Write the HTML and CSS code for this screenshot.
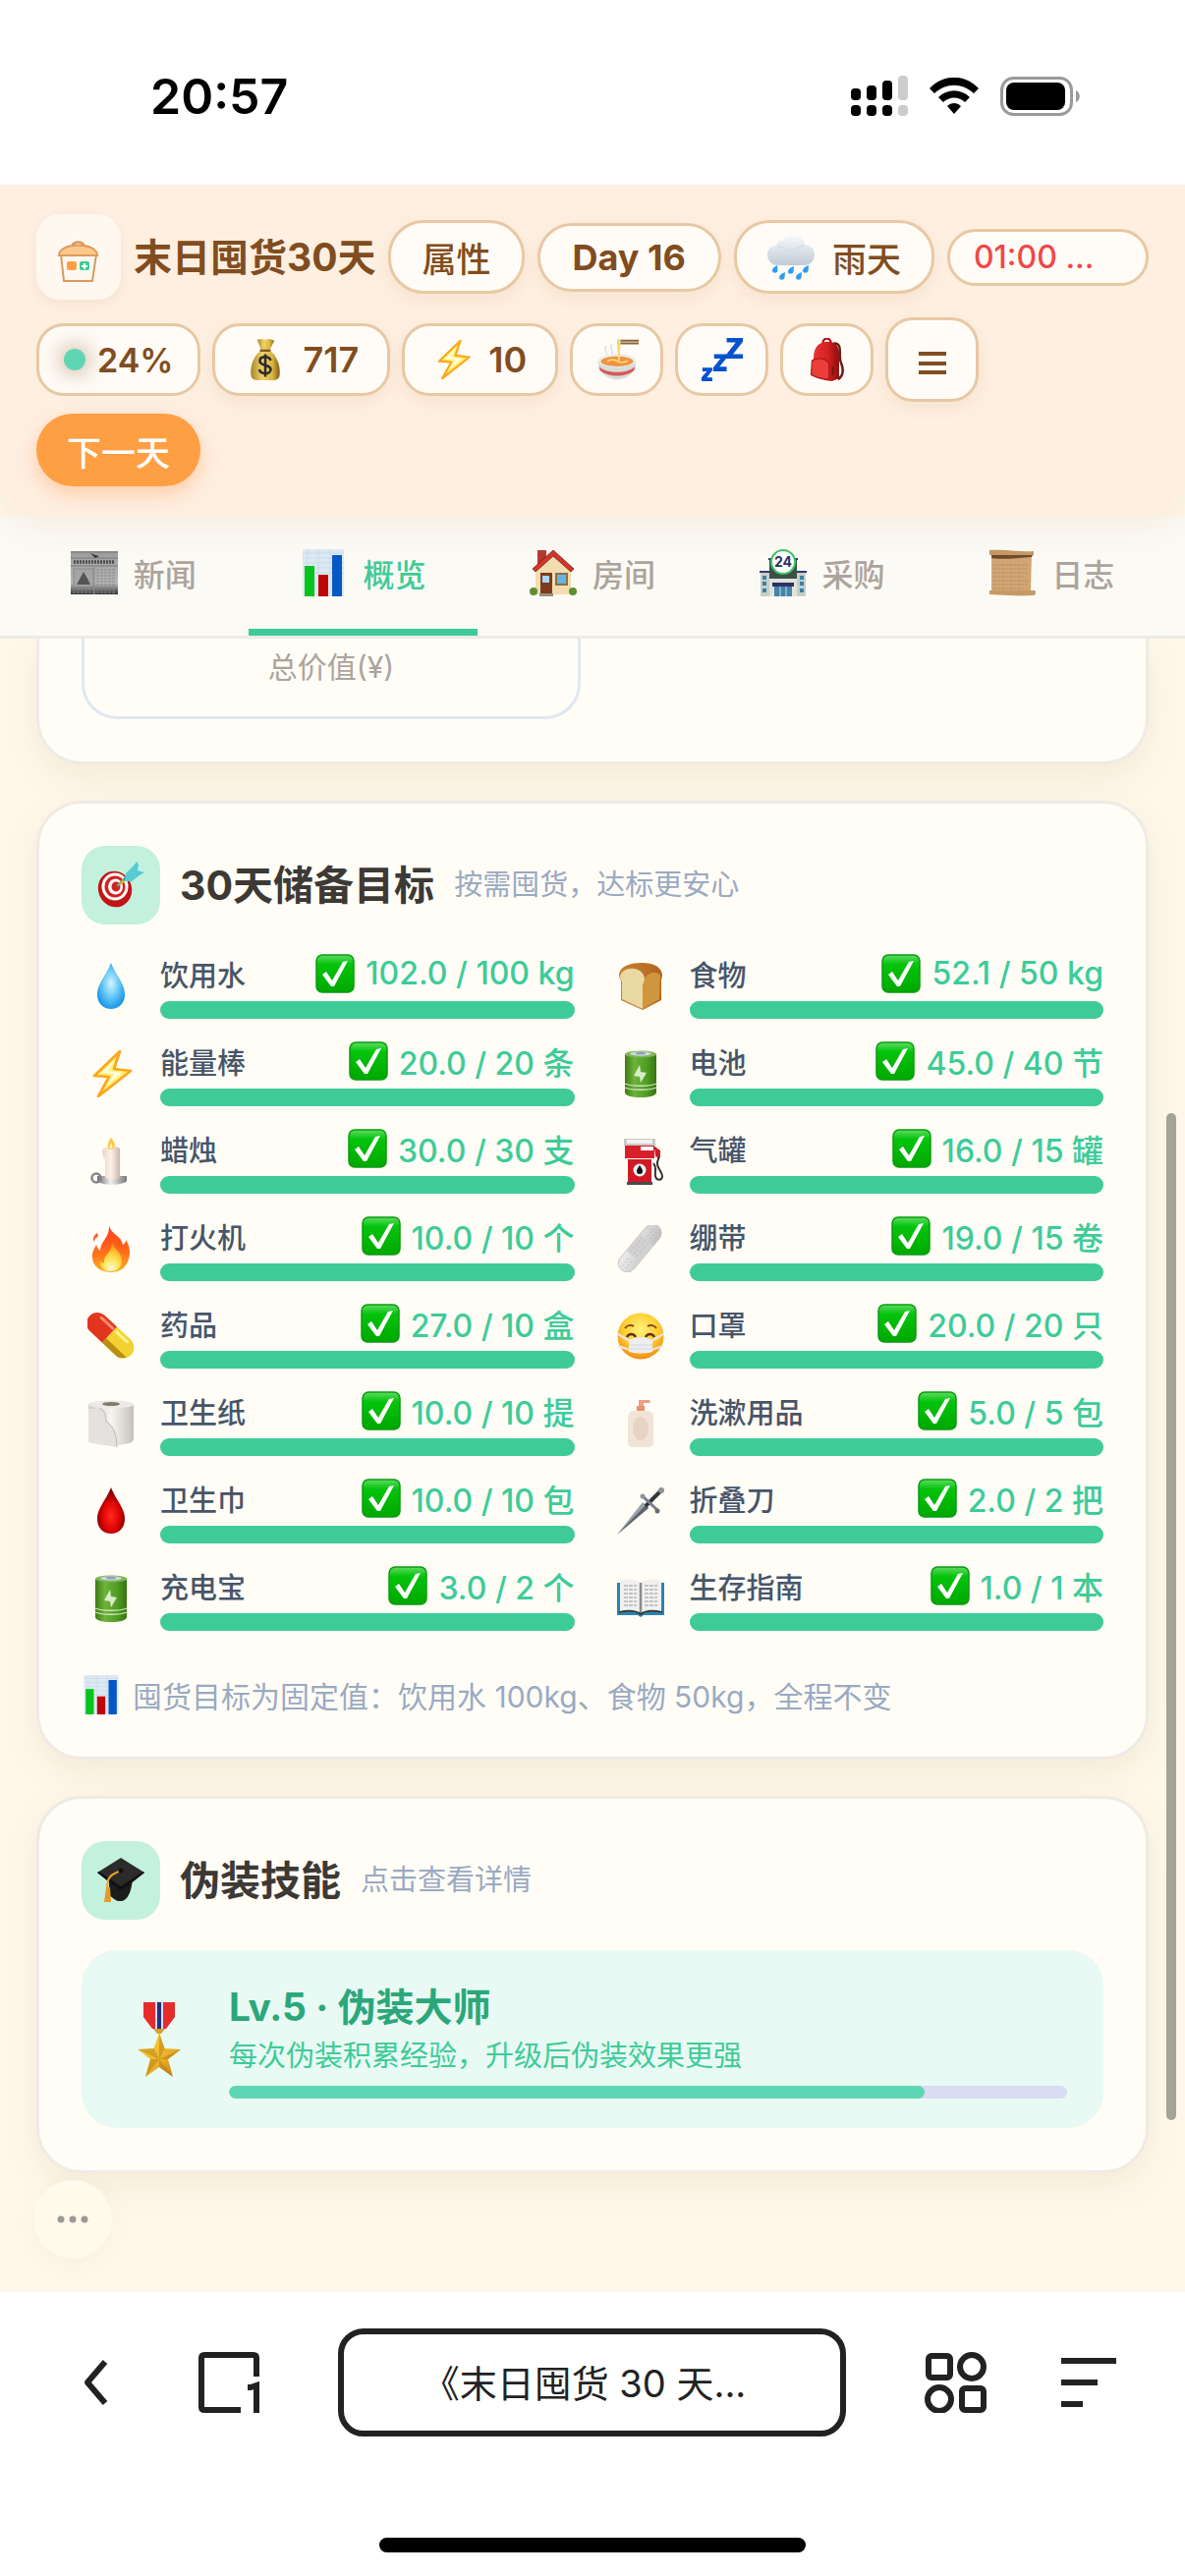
FILE: index.html
```html
<!DOCTYPE html>
<html lang="zh-CN">
<head>
<meta charset="utf-8">
<meta name="viewport" content="width=device-width, initial-scale=1">
<title>末日囤货30天</title>
<link rel="stylesheet" href="styles.css">
</head>
<body>
<svg class="sprite" aria-hidden="true">
  <defs>
    <linearGradient id="g-check" x1="0" y1="0" x2="0" y2="1"><stop offset="0" stop-color="#5fdc62"/><stop offset=".25" stop-color="#04c40c"/><stop offset="1" stop-color="#00a800"/></linearGradient>
    <linearGradient id="g-gold" x1="0" y1="0" x2="1" y2="0"><stop offset="0" stop-color="#a8842a"/><stop offset=".4" stop-color="#f0d468"/><stop offset=".75" stop-color="#d8b440"/><stop offset="1" stop-color="#7c5c16"/></linearGradient>
    <linearGradient id="g-cloud" x1="0" y1="0" x2="0" y2="1"><stop offset="0" stop-color="#fbfcfd"/><stop offset="1" stop-color="#bfcbd6"/></linearGradient>
    <linearGradient id="g-batt" x1="0" y1="0" x2="1" y2="0"><stop offset="0" stop-color="#3c7a14"/><stop offset=".3" stop-color="#6db43a"/><stop offset=".7" stop-color="#4f9c24"/><stop offset="1" stop-color="#37740f"/></linearGradient>
    <radialGradient id="g-water" cx=".5" cy=".45" r=".6"><stop offset="0" stop-color="#d6f4ff"/><stop offset=".45" stop-color="#6fccf8"/><stop offset="1" stop-color="#0e8fe6"/></radialGradient>
    <radialGradient id="g-blood" cx=".5" cy=".62" r=".5"><stop offset="0" stop-color="#ff2a20"/><stop offset=".6" stop-color="#e00505"/><stop offset="1" stop-color="#8c0000"/></radialGradient>
    <linearGradient id="g-fire" x1="0" y1="0" x2="0" y2="1"><stop offset="0" stop-color="#ff3a1c"/><stop offset=".55" stop-color="#ff6a1a"/><stop offset="1" stop-color="#ffb020"/></linearGradient>
    <radialGradient id="g-flame" cx=".5" cy=".9" r=".8"><stop offset="0" stop-color="#fffbd0"/><stop offset=".5" stop-color="#ffe04a"/><stop offset="1" stop-color="#ff9a1c"/></radialGradient>
    <linearGradient id="g-wax" x1="0" y1="0" x2="1" y2="0"><stop offset="0" stop-color="#e9d6cc"/><stop offset=".5" stop-color="#fbf1e6"/><stop offset="1" stop-color="#cdb4ac"/></linearGradient>
    <linearGradient id="g-metal" x1="0" y1="0" x2="1" y2="0"><stop offset="0" stop-color="#6d6d70"/><stop offset=".45" stop-color="#f0f0f0"/><stop offset="1" stop-color="#77777b"/></linearGradient>
    <radialGradient id="g-face" cx=".5" cy=".35" r=".65"><stop offset="0" stop-color="#fff27a"/><stop offset=".6" stop-color="#ffcb2e"/><stop offset="1" stop-color="#f08c10"/></radialGradient>
    <linearGradient id="g-paper" x1="0" y1="0" x2="1" y2="0"><stop offset="0" stop-color="#cfcdca"/><stop offset=".5" stop-color="#f6f5f2"/><stop offset="1" stop-color="#c5c1b8"/></linearGradient>
    <linearGradient id="g-news" x1="0" y1="0" x2="0" y2="1"><stop offset="0" stop-color="#9d9d9d"/><stop offset=".75" stop-color="#b6b6b6"/><stop offset="1" stop-color="#333333"/></linearGradient>
    <linearGradient id="g-crust" x1="0" y1="0" x2="1" y2="0"><stop offset="0" stop-color="#c9822f"/><stop offset="1" stop-color="#b0641f"/></linearGradient>
    <linearGradient id="g-bag" x1="0" y1="0" x2="1" y2="0"><stop offset="0" stop-color="#e83838"/><stop offset=".6" stop-color="#d42020"/><stop offset="1" stop-color="#8d0e10"/></linearGradient>
    <linearGradient id="g-star" x1="0" y1="0" x2="1" y2="1"><stop offset="0" stop-color="#ffe24d"/><stop offset=".6" stop-color="#e9ae28"/><stop offset="1" stop-color="#b87814"/></linearGradient>
    <linearGradient id="g-aid" x1="0" y1="0" x2="1" y2="1"><stop offset="0" stop-color="#f0f0f0"/><stop offset="1" stop-color="#bdbdbd"/></linearGradient>
  </defs>

  <symbol id="i-check" viewBox="0 0 40 40"><rect x="1" y="1" width="38" height="38" rx="6" fill="url(#g-check)" stroke="#0b9a12" stroke-width="1.5"/><path d="M7 21l4-3 6 9L28 8l5-1-14 26h-3z" fill="#fff"/></symbol>

  <symbol id="i-bolt" viewBox="0 0 48 48"><path d="M33 1L7 26l15 1L11 47l33-26-17-2z" fill="#fff176" stroke="#ffa51a" stroke-width="2.6" stroke-linejoin="round"/><path d="M28 9L14 23l13 1-8 12 16-13-14-2z" fill="#fffde0"/></symbol>

  <symbol id="i-chart" viewBox="0 0 48 48"><rect x="3" y="0" width="42" height="48" fill="#dde9f3"/><path d="M3 4h42M3 9h42M3 14h42M3 19h42M3 24h42M8 0v48M19 0v48M31 0v48" stroke="#c3d7e8" stroke-width=".7"/><rect x="5" y="17" width="10" height="31" fill="#06c41c"/><rect x="19" y="26" width="10" height="22" fill="#be0606"/><rect x="33" y="6" width="10" height="42" fill="#0458c6"/></symbol>

  <symbol id="i-battery" viewBox="0 0 48 48"><path d="M8 4v39c0 3 7 5 16 5s16-2 16-5V4z" fill="url(#g-batt)"/><ellipse cx="24" cy="4" rx="16" ry="3.600" fill="#7fb55a"/><ellipse cx="24" cy="3.500" rx="11" ry="2.200" fill="#cfd8dd"/><ellipse cx="24" cy="3" rx="5" ry="1.600" fill="#8aa3b5"/><path d="M23 15l-6 11 6 1 1 6 6-10-6-1z" fill="#d9ecc9"/><path d="M8 34c7 3 25 3 32 0M8 38c7 3 25 3 32 0" fill="none" stroke="#cfe6bd" stroke-width="1.300"/></symbol>

  <symbol id="i-money" viewBox="0 0 48 48"><path d="M15 2l5-1 4 1 5-1 5 2-6 12h-8z" fill="url(#g-gold)"/><path d="M19 14h10c7 5 12 16 11 26 0 5-3 7-8 7H16c-5 0-8-2-8-7-1-10 4-21 11-26z" fill="url(#g-gold)"/><path d="M18 14h12" stroke="#8a5a1e" stroke-width="2.6"/><path d="M30 25c-1-3-4-4-6-4-4 0-6 2-6 4.500 0 6 12 3.500 12 9.500 0 3-3 4.500-6 4.500-4 0-6-2-6.500-4.500M24 18v25" fill="none" stroke="#2b2b2b" stroke-width="2.8"/></symbol>

  <symbol id="i-rain" viewBox="0 0 48 48"><path d="M11 32C4 32 0 27 0 21c0-5 4-9 9-9 0-4 4-6 7-5 3-5 7-7 11-7 7 0 11 5 11 11 6 0 10 5 10 10 0 6-4 11-11 11z" fill="url(#g-cloud)"/><path d="M10 13c5 0 8 2 9 5 4-4 10-3 12 1M37 12c-3 0-6 2-7 5" fill="none" stroke="#d3dce4" stroke-width="1.500"/><g fill="#2a9df0"><path d="M10 32c-3 2-5 3-5 5.500 0 3 5 3 5.500 0z"/><path d="M18 39c-4 2-6 3-6 5.500 0 3 5 3 5.500 0z"/><path d="M27 33c-4 2-6 3-6 5.500 0 3 5 3 5.500 0z"/><path d="M35 39c-4 2-6 3-6 5.500 0 3 5 3 5.500 0z"/><path d="M42 32c-4 2-6 3-6 5.500 0 3 5 3 5.500 0z"/></g></symbol>

  <symbol id="i-noodle" viewBox="0 0 48 48"><path d="M24 2h24v2H24zM24 5h24v2H24z" fill="#8a6436"/><path d="M12 9c-4 5 3 7 0 12M18 7c-3 5 3 7 0 12" fill="none" stroke="#dcdcdc" stroke-width="1.500"/><path d="M3 25h42c1 10-7 21-21 21S2 35 3 25z" fill="#d9dcdc"/><path d="M4 32c9 8 31 8 40 0l-1 4c-9 8-29 8-38 0z" fill="#d45b55"/><ellipse cx="24" cy="25" rx="21" ry="7.500" fill="#eceeed"/><ellipse cx="24" cy="26" rx="18" ry="5.500" fill="#ee9440"/><path d="M13 26c5-3 8-2 12 0s8 1 11-1" stroke="#f8d27a" stroke-width="2" fill="none"/><path d="M24 2h4l-1 23h-2z" fill="#f3dc72"/></symbol>

  <symbol id="i-zzz" viewBox="0 0 48 48"><path d="M29 0h18v4L36 18h11v5H28v-4L39 5H29zM15 18h14v4l-8 10h8v5H14v-4l8-10h-7zM2 33h11v3l-6 8h6v4H1v-4l6-7H2z" fill="#0452d0"/></symbol>

  <symbol id="i-backpack" viewBox="0 0 48 48"><path d="M31 6c11-1 5 14 8 21s4 14-3 19" fill="none" stroke="#632017" stroke-width="2.6"/><path d="M19 6c0-7 9-7 9 0" fill="none" stroke="#a81518" stroke-width="2.500"/><path d="M9 18C10 9 16 4 24 4c9 0 13 5 13 13v28l-8 3C21 47 13 45 7 42z" fill="url(#g-bag)"/><path d="M7 25c7-4 16-2 19 4v17C19 46 12 44 6 41z" fill="#ec3d3b" stroke="#a41418" stroke-width="1.200"/><path d="M30 32v9" stroke="#6d0e10" stroke-width="1.800"/></symbol>

  <symbol id="i-news" viewBox="0 0 48 48"><rect x="0" y="2" width="48" height="44" fill="url(#g-news)"/><path d="M0 3h48M0 9h48M0 17h48" stroke="#777" stroke-width="1"/><path d="M3 13h42" stroke="#4c4c4c" stroke-width="3.500" stroke-dasharray="2 1"/><path d="M20 4l5 2 4 1-4 2z" fill="#333"/><rect x="3" y="20" width="20" height="18" fill="#a4a4a4" stroke="#888"/><path d="M6 36l7-13 3 5 4 8z" fill="#555"/><path d="M26 21h19M26 24h19M26 27h19M26 30h19M26 33h19M26 36h19M2 41h44M2 44h44" stroke="#888" stroke-width="1.200" stroke-dasharray="3 1"/><path d="M24 18v28" stroke="#888"/></symbol>

  <symbol id="i-house" viewBox="0 0 48 48"><path d="M8 1h9v15H8z" fill="#b53a2e"/><path d="M6 23L24 4l18 19v23H6z" fill="#f3dcb0"/><path d="M24 1L3 20l3 3L24 7l18 16 3-3z" fill="#d3352b" stroke="#6e1f18" stroke-width=".8"/><rect x="11" y="24" width="12" height="22" fill="#7d3a1e"/><rect x="13" y="27" width="7" height="7" fill="#a5d7f5"/><rect x="26" y="24" width="13" height="13" fill="#8b6f4a"/><rect x="28" y="26" width="9" height="9" fill="#6ab2e2"/><circle cx="4" cy="43" r="4" fill="#5e8f33"/><circle cx="44" cy="43" r="4" fill="#5e8f33"/><path d="M10 45h14v3H10z" fill="#9b8f86"/></symbol>

  <symbol id="i-scroll" viewBox="0 0 48 48"><path d="M3 4h41l-1 40H3z" fill="#d1a674"/><path d="M1 1c15-1 30 2 45 1v4H1z" fill="#c49867"/><path d="M3 6h42l-1 2C30 9 12 11 3 9z" fill="#6e4a27"/><path d="M1 42h45c3 0 3 4 0 5-15 1-30 0-45-1z" fill="#c79a65"/><path d="M5 16h35M5 20h34M5 24h35M5 28h33M5 32h35M5 36h34M5 40h30" stroke="#b98e60" stroke-width="1" stroke-dasharray="4 1 2 1"/></symbol>

  <symbol id="i-target" viewBox="0 0 48 48"><ellipse cx="18" cy="28" rx="17" ry="18.500" fill="#c01616" transform="rotate(-20 18 28)"/><ellipse cx="18" cy="25.500" rx="13.500" ry="14" fill="#fff"/><ellipse cx="18" cy="25.500" rx="10.500" ry="11" fill="#d42020"/><ellipse cx="18.500" cy="25.500" rx="7.500" ry="8" fill="#fff"/><ellipse cx="19" cy="25.500" rx="4.500" ry="5" fill="#d42020"/><path d="M20 25L37 9" stroke="#2d9aa8" stroke-width="2.500"/><path d="M28 20l1-8 9-9 2-3 2 3-1 6 7 2-5 3-8 6z" fill="#56cbd3"/><path d="M20 25l6-7 2 3z" fill="#e2b423"/></symbol>

  <symbol id="i-water" viewBox="0 0 48 48"><path d="M24 0c5 13 14 21 14 32 0 9-6 15-14 15S10 41 10 32C10 21 19 13 24 0z" fill="url(#g-water)"/></symbol>
  <symbol id="i-blood" viewBox="0 0 48 48"><path d="M24 0c5 13 14 21 14 32 0 9-6 15-14 15S10 41 10 32C10 21 19 13 24 0z" fill="url(#g-blood)"/></symbol>

  <symbol id="i-bread" viewBox="0 0 48 48"><path d="M2 12C3 3 14 0 25 0c12 0 20 4 21 12 0 3-1 4-1 6v20L26 48 4 38V18c-1-2-2-3-2-6z" fill="url(#g-crust)"/><path d="M3 14c1-6 8-9 14-8 7 1 11 5 11 11 0 3-2 4-2 7v23L5 37V19c-1-2-2-3-2-5z" fill="#e9d8a2"/><path d="M28 17c2-7 11-9 16-5l-1 25-17 10V24c0-3 2-4 2-7z" fill="#d2953f"/></symbol>

  <symbol id="i-candle" viewBox="0 0 48 48"><path d="M10 39h30v5c-4 5-26 5-30 0z" fill="url(#g-metal)"/><circle cx="9" cy="41" r="4.500" fill="none" stroke="#85858a" stroke-width="2.500"/><path d="M15 12c5-4 13-4 18-1v30c-4 2-11 2-15 0V22c-2 0-3-5-3-10z" fill="url(#g-wax)"/><path d="M24 0c6 7 4 12 0 12s-5-5 0-12z" fill="#ffc63d"/><path d="M24 5c2 4 2 6 0 6s-2-3 0-6z" fill="#fff6c0"/></symbol>

  <symbol id="i-gas" viewBox="0 0 48 48"><path d="M8 1h30v20H8z" fill="#d8202b"/><path d="M7 1h32v7H7z" fill="#c9c9cb"/><path d="M10 2h26v4H10z" fill="#f1f1f1"/><rect x="24" y="9" width="13" height="4" fill="#fff"/><path d="M11 22h24v23H11z" fill="#cf1a25"/><path d="M10 45h26v3H10z" fill="#4a4a4d"/><circle cx="23" cy="33" r="6.500" fill="#f2f2f2"/><path d="M23 28c2 3 3 4 3 6a3 3 0 0 1-6 0c0-2 1-3 3-6z" fill="#111"/><path d="M38 10l4 4v8c-4 7 4 12 4 17 0 5-6 5-7 0-1-5 2-8-2-13" fill="none" stroke="#333" stroke-width="2"/><path d="M38 9l6 4v8l-5-2z" fill="#c91b26"/></symbol>

  <symbol id="i-fire" viewBox="0 0 48 48"><path d="M22 0c1 9 13 11 14 20 2-1 3-3 3-5 4 6 5 13 3 19-2 9-9 14-18 14S6 43 5 34c-1-6 2-10 4-14 1 3 2 5 4 6 0-10 10-13 9-26zM8 13c3 0 3-2 2-5-4 3-5 6-3 9z" fill="url(#g-fire)"/><path d="M25 18c2 6 9 9 10 17 1 7-4 12-11 12s-12-4-11-11c1 2 3 3 4 2-1-8 8-10 8-20z" fill="url(#g-flame)"/></symbol>

  <symbol id="i-aid" viewBox="0 0 48 48"><g transform="rotate(-50 24 24)"><rect x="-5" y="14" width="58" height="18" rx="9" fill="url(#g-aid)" stroke="#bdbdbd" stroke-width=".8"/><rect x="13" y="14" width="22" height="18" fill="#d2d2d2"/><path d="M16 18h17M16 22h17M16 26h17M-1 21h10M-1 25h10M38 21h10M38 25h10" stroke="#aaa" stroke-width="1" stroke-dasharray="1 3"/></g></symbol>

  <symbol id="i-pill" viewBox="0 0 48 48"><g transform="rotate(43 24 24)"><path d="M22 13H5a11 11 0 0 0 0 22h17z" fill="#e2351f"/><path d="M22 13h19a11 11 0 0 1 0 22H22z" fill="#f2d232"/><path d="M22 29h28c-2 4-5 6-9 6H22z" fill="#b88f12"/><path d="M4 17h16" stroke="#ff8a70" stroke-width="3" stroke-linecap="round"/><path d="M25 17h15" stroke="#fff38e" stroke-width="3" stroke-linecap="round"/></g></symbol>

  <symbol id="i-mask" viewBox="0 0 48 48"><circle cx="24" cy="24" r="23.500" fill="url(#g-face)"/><path d="M8 16c2-3 6-4 9-2M40 16c-2-3-6-4-9-2" fill="none" stroke="#8a4b0c" stroke-width="2"/><path d="M10 25c2-4 7-4 9 0M38 25c-2-4-7-4-9 0" fill="none" stroke="#5d3208" stroke-width="2.400"/><path d="M1 22l12 7M1 34l12 4M47 22l-12 7M47 34l-12 4" stroke="#e6e6ea" stroke-width="2.200"/><path d="M12 28c8-4 16-4 24 0v12c-8 2-16 2-24 0z" fill="#eeeef2"/><path d="M12 33h24M12 37h24" stroke="#d3d3da" stroke-width="1"/></symbol>

  <symbol id="i-roll" viewBox="0 0 48 48"><path d="M1 4v36c0 4 13 6 24 6s22-2 22-6V4z" fill="url(#g-paper)"/><ellipse cx="24" cy="4.500" rx="23" ry="4" fill="#eceae6"/><ellipse cx="24" cy="4" rx="9" ry="2" fill="#837b6f"/><path d="M12 9c6 1 7 7 7 13 6 3 11 12 11 26L1 43V9z" fill="#e4e2de"/><path d="M12 9c6 1 7 7 7 13 6 3 11 12 11 26" fill="none" stroke="#bab7b1" stroke-width="1"/></symbol>

  <symbol id="i-lotion" viewBox="0 0 48 48"><path d="M22 0h11l1 3h-7v6h-5z" fill="#f0a080"/><path d="M20 6h8v5h-8z" fill="#ef8f70"/><path d="M16 11h16c4 1 5 4 5 8v24c0 3-2 5-5 5H16c-3 0-5-2-5-5V19c0-4 1-7 5-8z" fill="#f1e4d6"/><ellipse cx="24" cy="29" rx="8" ry="12" fill="#e7d3c6"/></symbol>

  <symbol id="i-dagger" viewBox="0 0 48 48"><path d="M0 48L26 15l6 6z" fill="#9aa3ac"/><path d="M0 48L29 18l3 3z" fill="#5c656e"/><path d="M29 19L44 4" stroke="#33363b" stroke-width="4"/><path d="M26 9l16 15" stroke="#777e87" stroke-width="3"/><circle cx="26" cy="9" r="2.500" fill="#8b929b"/><circle cx="41" cy="24" r="2.500" fill="#666d76"/><circle cx="45" cy="3" r="3" fill="#8b929b"/></symbol>

  <symbol id="i-book" viewBox="0 0 48 48"><path d="M0 8h48v33H27l-3 2-3-2H0z" fill="#2c83ad"/><path d="M3 6c8-3 16-1 21 2 5-3 13-5 21-2v31c-8-1-16-1-21 3-5-4-13-4-21-3z" fill="#f0f0ee"/><path d="M24 8v32" stroke="#8c8c8c" stroke-width="2.500"/><path d="M7 11h13M7 15h13M7 19h13M7 23h13M7 27h13M7 31h13M28 11h13M28 15h13M28 19h13M28 23h13M28 27h13M28 31h13" stroke="#b5b5b8" stroke-width="1.300" stroke-dasharray="4 1"/><path d="M2 38c8-2 17-2 22 2 5-4 14-4 22-2" fill="none" stroke="#353535" stroke-width="1.800"/></symbol>

  <symbol id="i-cap" viewBox="0 0 48 48"><path d="M12 20v19c6 4 6 6 12 6s11-8 12-24z" fill="#1c1c1c"/><path d="M24 1L48 16 24 35 0 16z" fill="#2b2b2b"/><path d="M24 35L0 16l2-1 22 15 23-15 1 1z" fill="#111"/><path d="M24 14C14 18 10 20 10 32" fill="none" stroke="#e7a52a" stroke-width="2"/><circle cx="24" cy="14" r="2.500" fill="#111"/><path d="M9 31h4l1 15H7z" fill="#e59a25"/></symbol>

  <symbol id="i-medal" viewBox="0 0 48 76"><path d="M8 0h32v15l-9 12H17L8 15z" fill="#e62b2b"/><path d="M20 0h8v27h-8z" fill="#dcdcf2"/><path d="M22 0h4v27h-4z" fill="#22307a"/><path d="M18 27h12l-4 5h-4z" fill="#d8a028"/><path d="M24 31l5.500 16L46 48 33 58l5 18-14-10-14 10 5-18L2 48l16.500-1z" fill="url(#g-star)"/><path d="M24 31v27l5.500-11zM46 48L24 58l9 0zM38 76L24 58v8zM10 76l14-18-9 0zM2 48l22 10-5.500-11z" fill="#a56d10" opacity=".4"/></symbol>
</svg>

<div class="status">
  <time class="clock">20:57</time>
  <div class="indicators">
    <svg width="58" height="42" viewBox="0 0 58 42" aria-label="信号"><g><rect x="0" y="13" width="10" height="12" rx="4"/><rect x="16" y="10" width="10" height="15" rx="4"/><rect x="32" y="5" width="10" height="20" rx="4"/><rect x="0" y="30" width="10" height="11" rx="4"/><rect x="16" y="30" width="10" height="11" rx="4"/><rect x="32" y="30" width="10" height="11" rx="4"/></g><g fill="#ccc"><rect x="48" y="0" width="10" height="25" rx="4"/><rect x="48" y="30" width="10" height="11" rx="4"/></g></svg>
    <svg width="50" height="38" viewBox="0 0 50 38" aria-label="无线网络"><path d="M0 11C14-4 36-4 50 11l-5 5C33 5 17 5 5 16zM9 20c9-9 23-9 32 0l-5 5c-6-6-16-6-22 0zM18 29c4-4 10-4 14 0l-7 8z"/></svg>
    <svg width="82" height="40" viewBox="0 0 82 40" aria-label="电量"><rect x="1.500" y="1.500" width="71" height="37" rx="12" fill="none" stroke="#9a9a9a" stroke-width="3"/><rect x="6" y="6" width="60" height="28" rx="8"/><path d="M77 14c5 2 5 10 0 12z" fill="#9a9a9a"/></svg>
  </div>
</div>

<div class="app">
<header class="topbar">
  <div class="brand-row">
    <div class="logo">
      <svg width="86" height="86" viewBox="0 0 86 86" aria-hidden="true"><path d="M36 33c2-6 11-6 13 0" fill="none" stroke="#d99a5e" stroke-width="2.500"/><path d="M25 41l3 27h29l4-27z" fill="#fff8ee" stroke="#d99a5e" stroke-width="2"/><path d="M23 42c0-14 39-14 39 0z" fill="#fec78c" stroke="#dd9b5c" stroke-width="2"/><rect x="31" y="48" width="10" height="9" rx="2" fill="#ff9f43"/><rect x="44" y="48" width="10" height="9" rx="2" fill="#3ecb99"/><path d="M49 50v6M46 53h6" stroke="#fff" stroke-width="2"/></svg>
    </div>
    <h1 class="brand">末日囤货30天</h1>
    <button class="pill pill-tall">属性</button>
    <button class="pill pill-day">Day 16</button>
    <button class="pill pill-tall pill-weather"><svg class="ic48"><use href="#i-rain"/></svg>雨天</button>
    <div class="pill pill-time">01:00 ...</div>
  </div>
  <div class="actions">
    <div class="stat-row">
      <div class="pill stat stat-percent"><span class="dot"></span>24%</div>
      <div class="pill stat"><svg class="ic44"><use href="#i-money"/></svg>717</div>
      <div class="pill stat"><svg class="ic40"><use href="#i-bolt"/></svg>10</div>
      <button class="pill square" aria-label="吃饭"><svg class="ic44"><use href="#i-noodle"/></svg></button>
      <button class="pill square" aria-label="睡觉"><svg class="ic44"><use href="#i-zzz"/></svg></button>
      <button class="pill square" aria-label="背包"><svg class="ic44"><use href="#i-backpack"/></svg></button>
      <button class="pill square square-menu" aria-label="菜单"><svg width="28" height="32" viewBox="0 0 28 32"><path d="M0 10h28M0 20h28M0 29h28" stroke="#814d20" stroke-width="4"/></svg></button>
    </div>
    <button class="next-day">下一天</button>
  </div>
</header>

<nav class="tabs">
  <a class="tab" href="#news"><svg class="ic48"><use href="#i-news"/></svg>新闻</a>
  <a class="tab active" href="#overview" aria-current="page"><svg class="ic48"><use href="#i-chart"/></svg>概览</a>
  <a class="tab" href="#room"><svg class="ic48"><use href="#i-house"/></svg>房间</a>
  <a class="tab" href="#shop"><svg class="ic48" viewBox="0 0 48 48"><path d="M1 23h46v25H1z" fill="#c8cec6"/><path d="M10 10h28v38H10z" fill="#dfe3da"/><path d="M10 10h28v20H10z" fill="#3b5147"/><path d="M0 22h10v2H0zM38 22h10v2H38zM9 9h6v2H9zM33 9h6v2h-6z" fill="#353870"/><circle cx="24" cy="13" r="12" fill="#fff" stroke="#3bc463" stroke-width="2"/><text x="24" y="18" text-anchor="middle" class="store-num">24</text><path d="M13 34h22v4H13z" fill="#2e3163"/><path d="M15 38h18v10H15z" fill="#4484a8"/><path d="M21 38v10M27 38v10" stroke="#c8dde6" stroke-width="1"/><path d="M3 27h4v4H3zM3 33h4v4H3zM3 40h4v4H3zM41 27h4v4h-4zM41 33h4v4h-4zM41 40h4v4h-4z" fill="#3980aa"/></svg>采购</a>
  <a class="tab" href="#log"><svg class="ic48"><use href="#i-scroll"/></svg>日志</a>
</nav>

<main class="content">
  <section class="card card-cut">
    <div class="summary"><div class="summary-box">总价值(¥)</div></div>
  </section>

  <section class="card">
    <div class="card-head">
      <span class="badge"><svg class="ic48"><use href="#i-target"/></svg></span>
      <h2>30天储备目标</h2>
      <p class="hint">按需囤货，达标更安心</p>
    </div>
    <ul class="goals">
      <li class="goal"><svg class="ic48"><use href="#i-water"/></svg><div class="goal-main"><div class="goal-line"><span class="name">饮用水</span><span class="value"><svg class="tick"><use href="#i-check"/></svg>102.0 / 100 kg</span></div><div class="bar"><div class="fill" style="width:100%"></div></div></div></li>
      <li class="goal"><svg class="ic48"><use href="#i-bread"/></svg><div class="goal-main"><div class="goal-line"><span class="name">食物</span><span class="value"><svg class="tick"><use href="#i-check"/></svg>52.1 / 50 kg</span></div><div class="bar"><div class="fill" style="width:100%"></div></div></div></li>
      <li class="goal"><svg class="ic48"><use href="#i-bolt"/></svg><div class="goal-main"><div class="goal-line"><span class="name">能量棒</span><span class="value"><svg class="tick"><use href="#i-check"/></svg>20.0 / 20 条</span></div><div class="bar"><div class="fill" style="width:100%"></div></div></div></li>
      <li class="goal"><svg class="ic48"><use href="#i-battery"/></svg><div class="goal-main"><div class="goal-line"><span class="name">电池</span><span class="value"><svg class="tick"><use href="#i-check"/></svg>45.0 / 40 节</span></div><div class="bar"><div class="fill" style="width:100%"></div></div></div></li>
      <li class="goal"><svg class="ic48"><use href="#i-candle"/></svg><div class="goal-main"><div class="goal-line"><span class="name">蜡烛</span><span class="value"><svg class="tick"><use href="#i-check"/></svg>30.0 / 30 支</span></div><div class="bar"><div class="fill" style="width:100%"></div></div></div></li>
      <li class="goal"><svg class="ic48"><use href="#i-gas"/></svg><div class="goal-main"><div class="goal-line"><span class="name">气罐</span><span class="value"><svg class="tick"><use href="#i-check"/></svg>16.0 / 15 罐</span></div><div class="bar"><div class="fill" style="width:100%"></div></div></div></li>
      <li class="goal"><svg class="ic48"><use href="#i-fire"/></svg><div class="goal-main"><div class="goal-line"><span class="name">打火机</span><span class="value"><svg class="tick"><use href="#i-check"/></svg>10.0 / 10 个</span></div><div class="bar"><div class="fill" style="width:100%"></div></div></div></li>
      <li class="goal"><svg class="ic48"><use href="#i-aid"/></svg><div class="goal-main"><div class="goal-line"><span class="name">绷带</span><span class="value"><svg class="tick"><use href="#i-check"/></svg>19.0 / 15 卷</span></div><div class="bar"><div class="fill" style="width:100%"></div></div></div></li>
      <li class="goal"><svg class="ic48"><use href="#i-pill"/></svg><div class="goal-main"><div class="goal-line"><span class="name">药品</span><span class="value"><svg class="tick"><use href="#i-check"/></svg>27.0 / 10 盒</span></div><div class="bar"><div class="fill" style="width:100%"></div></div></div></li>
      <li class="goal"><svg class="ic48"><use href="#i-mask"/></svg><div class="goal-main"><div class="goal-line"><span class="name">口罩</span><span class="value"><svg class="tick"><use href="#i-check"/></svg>20.0 / 20 只</span></div><div class="bar"><div class="fill" style="width:100%"></div></div></div></li>
      <li class="goal"><svg class="ic48"><use href="#i-roll"/></svg><div class="goal-main"><div class="goal-line"><span class="name">卫生纸</span><span class="value"><svg class="tick"><use href="#i-check"/></svg>10.0 / 10 提</span></div><div class="bar"><div class="fill" style="width:100%"></div></div></div></li>
      <li class="goal"><svg class="ic48"><use href="#i-lotion"/></svg><div class="goal-main"><div class="goal-line"><span class="name">洗漱用品</span><span class="value"><svg class="tick"><use href="#i-check"/></svg>5.0 / 5 包</span></div><div class="bar"><div class="fill" style="width:100%"></div></div></div></li>
      <li class="goal"><svg class="ic48"><use href="#i-blood"/></svg><div class="goal-main"><div class="goal-line"><span class="name">卫生巾</span><span class="value"><svg class="tick"><use href="#i-check"/></svg>10.0 / 10 包</span></div><div class="bar"><div class="fill" style="width:100%"></div></div></div></li>
      <li class="goal"><svg class="ic48"><use href="#i-dagger"/></svg><div class="goal-main"><div class="goal-line"><span class="name">折叠刀</span><span class="value"><svg class="tick"><use href="#i-check"/></svg>2.0 / 2 把</span></div><div class="bar"><div class="fill" style="width:100%"></div></div></div></li>
      <li class="goal"><svg class="ic48"><use href="#i-battery"/></svg><div class="goal-main"><div class="goal-line"><span class="name">充电宝</span><span class="value"><svg class="tick"><use href="#i-check"/></svg>3.0 / 2 个</span></div><div class="bar"><div class="fill" style="width:100%"></div></div></div></li>
      <li class="goal"><svg class="ic48"><use href="#i-book"/></svg><div class="goal-main"><div class="goal-line"><span class="name">生存指南</span><span class="value"><svg class="tick"><use href="#i-check"/></svg>1.0 / 1 本</span></div><div class="bar"><div class="fill" style="width:100%"></div></div></div></li>
    </ul>
    <p class="note"><svg class="tick"><use href="#i-chart"/></svg>囤货目标为固定值：饮用水 100kg、食物 50kg，全程不变</p>
  </section>

  <section class="card">
    <div class="card-head">
      <span class="badge"><svg class="ic48"><use href="#i-cap"/></svg></span>
      <h2>伪装技能</h2>
      <p class="hint">点击查看详情</p>
    </div>
    <div class="skill">
      <div class="medal"><svg width="48" height="76"><use href="#i-medal"/></svg></div>
      <div class="skill-main">
        <h3>Lv.5 · 伪装大师</h3>
        <p>每次伪装积累经验，升级后伪装效果更强</p>
        <div class="xp"><div class="xp-fill" style="width:83%"></div></div>
      </div>
    </div>
  </section>

  <button class="float-more" aria-label="更多"><svg width="32" height="8" viewBox="0 0 32 8" fill="#9c9b95"><circle cx="4" cy="4" r="3.500"/><circle cx="16" cy="4" r="3.500"/><circle cx="28" cy="4" r="3.500"/></svg></button>
  <div class="scroll-thumb"></div>
</main>
</div>

<footer class="browser">
  <div class="browser-bar">
    <button class="tool" aria-label="返回"><svg width="26" height="46" viewBox="0 0 26 46"><path d="M22 2L4 23l18 21" fill="none" stroke="#222" stroke-width="6" stroke-linejoin="round"/></svg></button>
    <button class="tool tool-tabs" aria-label="标签页"><svg width="62" height="62" viewBox="0 0 62 62"><path d="M59 25V6q0-3-3-3H6Q3 3 3 6v50q0 3 3 3h37" fill="none" stroke="#222" stroke-width="6"/><path d="M50 36h3l6-2v28" fill="none" stroke="#222" stroke-width="6"/></svg></button>
    <button class="address">《末日囤货 30 天...</button>
    <button class="tool tool-apps" aria-label="应用"><svg width="64" height="62" viewBox="0 0 64 62" fill="none" stroke="#222" stroke-width="6"><rect x="4" y="4" width="22" height="22" rx="3"/><circle cx="48" cy="15" r="12"/><circle cx="15" cy="48" r="12"/><rect x="38" y="37" width="22" height="22" rx="3"/></svg></button>
    <button class="tool" aria-label="选项"><svg width="56" height="50" viewBox="0 0 56 50"><path d="M0 3h56M0 25h37M0 47h22" stroke="#222" stroke-width="6"/></svg></button>
  </div>
  <div class="home-bar"></div>
</footer>
</body>
</html>
```

FILE: styles.css
```css
* { box-sizing: border-box; }

body {
  margin: 0;
  min-height: 100vh;
  display: flex;
  flex-direction: column;
  background: #fff;
  font-family: Inter, "Noto Sans CJK SC", sans-serif;
  color: #3d3935;
}

button { font: inherit; color: inherit; margin: 0; padding: 0; border: 0; background: none; }
h1, h2, h3, p, ul { margin: 0; padding: 0; }
ul { list-style: none; }
svg { display: block; flex: none; }

.sprite { position: absolute; width: 0; height: 0; }
.store-num { font: 700 14px Inter, sans-serif; fill: #2e3163; }
.ic48 { width: 48px; height: 48px; }
.ic44 { width: 44px; height: 44px; }
.ic40 { width: 40px; height: 44px; }
.tick { width: 40px; height: 40px; }

/* Status bar */
.status {
  height: 188px;
  display: flex;
  align-items: center;
  justify-content: space-between;
  padding: 8px 106px 0 153px;
}
.clock { font-size: 50px; font-weight: 600; color: #000; }
.indicators { display: flex; align-items: center; gap: 22px; }

.app {
  flex: 1;
  display: flex;
  flex-direction: column;
  background: #fff8ea;
  overflow: hidden;
}

/* Header */
.topbar {
  position: relative;
  z-index: 2;
  background: #feefe1;
  padding: 30px 37px 31px;
  display: flex;
  flex-direction: column;
  gap: 18px;
  border-radius: 0 0 40px 40px;
  box-shadow: 0 8px 36px rgba(180, 130, 80, .12);
}
.brand-row { display: flex; align-items: center; gap: 13px; }
.logo {
  width: 86px;
  height: 87px;
  border-radius: 24px;
  background: #fff8f1;
  box-shadow: 0 4px 12px rgba(200, 140, 80, .12);
}
.brand { font-size: 39px; font-weight: 700; line-height: 56px; color: #814d20; white-space: nowrap; }

.pill {
  display: flex;
  align-items: center;
  justify-content: center;
  border: 3px solid #e8c8a4;
  border-radius: 36px;
  background: #fffcf7;
  color: #814d20;
  white-space: nowrap;
  box-shadow: 0 6px 16px rgba(200, 140, 80, .12);
}
.pill-tall { height: 75px; padding: 0 31px; font-size: 35px; font-weight: 500; }
.pill-day { height: 70px; padding: 0 33px; font-size: 36px; font-weight: 700; }
.pill-weather { gap: 18px; }
.pill-time {
  flex: 1;
  height: 58px;
  padding: 0 24px;
  justify-content: flex-start;
  font-size: 32px;
  font-weight: 500;
  color: #f04848;
  box-shadow: none;
}

.actions { display: flex; flex-direction: column; align-items: flex-start; gap: 12px; }
.stat-row { display: flex; flex-wrap: wrap; align-items: center; gap: 12px; }
.stat { height: 74px; gap: 16px; padding: 0 29px; border-radius: 28px; font-size: 36px; font-weight: 600; }
.stat-percent { gap: 12px; padding: 0 25px; font-size: 34px; box-shadow: none; }
.dot { width: 22px; height: 22px; border-radius: 50%; background: #5fd6b3; box-shadow: 0 0 24px rgba(129, 77, 32, .7); }
.square { width: 95px; height: 74px; border-radius: 28px; box-shadow: none; }
.square-menu { height: 86px; box-shadow: 0 6px 16px rgba(200, 140, 80, .12); }
.next-day {
  height: 74px;
  padding: 0 31px;
  border-radius: 37px;
  background: #ff9f43;
  color: #fff;
  font-size: 35px;
  font-weight: 500;
  box-shadow: 0 8px 20px rgba(255, 140, 67, .35);
}

/* Tabs */
.tabs {
  position: relative;
  z-index: 1;
  display: flex;
  padding: 0 19px;
  background: #fcfaf5;
  border-bottom: 3px solid #eeebe6;
}
.tab {
  flex: 1;
  height: 121px;
  display: flex;
  align-items: center;
  justify-content: center;
  gap: 16px;
  font-size: 32px;
  font-weight: 500;
  color: #aba49c;
  text-decoration: none;
  border-bottom: 7px solid transparent;
}
.tab.active { color: #3ecb99; border-color: #3ecb99; }

/* Content */
.content {
  position: relative;
  flex: 1;
  display: flex;
  flex-direction: column;
  gap: 37px;
  padding: 0 37px 100px;
}
.card {
  padding: 43px;
  border: 3px solid #eeebe6;
  border-radius: 46px;
  background: #fffdf6;
  box-shadow: 0 12px 36px rgba(140, 110, 40, .1);
}
.card-cut { border-top: 0; border-radius: 0 0 46px 46px; padding-top: 0; }
.summary { display: grid; grid-template-columns: 1fr 1fr; gap: 24px; }
.summary-box {
  height: 82px;
  padding-top: 7px;
  border: 3px solid #e0e7f1;
  border-top: 0;
  border-radius: 0 0 36px 36px;
  text-align: center;
  font-size: 30px;
  line-height: 44px;
  color: #aba49c;
}

.card-head { display: flex; align-items: center; gap: 20px; }
.badge {
  width: 80px;
  height: 80px;
  display: grid;
  place-items: center;
  border-radius: 24px;
  background: #c4f0de;
}
h2 { font-size: 41px; font-weight: 700; line-height: 60px; }
.hint { font-size: 29px; line-height: 44px; color: #9aa9c2; }

.goals { display: grid; grid-template-columns: 1fr 1fr; gap: 22px 37px; margin-top: 29px; }
.goal { display: flex; align-items: center; gap: 26px; padding-left: 6px; }
.goal-main { flex: 1; display: flex; flex-direction: column; gap: 8px; }
.goal-line { height: 41px; display: flex; align-items: center; justify-content: space-between; }
.name { font-size: 29px; font-weight: 500; color: #475569; }
.value { display: flex; align-items: center; gap: 11px; font-size: 32px; font-weight: 500; color: #3ecb99; }
.bar { height: 18px; border-radius: 9px; background: #e6eaf0; }
.fill { height: 100%; border-radius: 9px; background: #3ecb99; }
.note {
  display: flex;
  align-items: center;
  gap: 12px;
  height: 40px;
  margin-top: 45px;
  font-size: 30px;
  color: #9aa9c2;
}

.skill {
  display: flex;
  align-items: center;
  gap: 29px;
  margin-top: 31px;
  padding: 30px 37px;
  border-radius: 36px;
  background: #e8faf3;
}
.medal { width: 84px; display: grid; place-items: center; }
.skill-main { flex: 1; }
h3 { font-size: 39px; font-weight: 700; line-height: 56px; color: #2ba77b; }
.skill-main p { font-size: 29px; line-height: 44px; color: #3ecb99; }
.xp { height: 13px; margin-top: 8px; border-radius: 7px; background: #d9dcf4; overflow: hidden; }
.xp-fill { height: 100%; border-radius: 7px; background: #5fd6b3; }

.float-more {
  position: absolute;
  left: 34px;
  bottom: 34px;
  width: 80px;
  height: 80px;
  display: grid;
  place-items: center;
  border-radius: 50%;
  background: #fffaec;
  box-shadow: 0 6px 24px rgba(140, 120, 60, .06);
}
.scroll-thumb {
  position: absolute;
  right: 9px;
  top: 483px;
  bottom: 175px;
  width: 10px;
  border-radius: 5px;
  background: #a5a296;
}

/* Browser toolbar */
.browser { padding: 37px 0 24px; }
.browser-bar { display: flex; align-items: center; padding: 0 70px 0 85px; }
.tool { display: grid; place-items: center; }
.tool-tabs { margin-left: 91px; }
.address {
  flex: 1;
  height: 110px;
  margin: 0 80px;
  padding: 0 16px 4px 0;
  border: 6px solid #222;
  border-radius: 26px;
  font-size: 38px;
  color: #222;
  white-space: nowrap;
}
.tool-apps { margin-right: 75px; }
.home-bar { width: 36%; height: 15px; margin: 103px auto 0; border-radius: 8px; background: #000; }
```
